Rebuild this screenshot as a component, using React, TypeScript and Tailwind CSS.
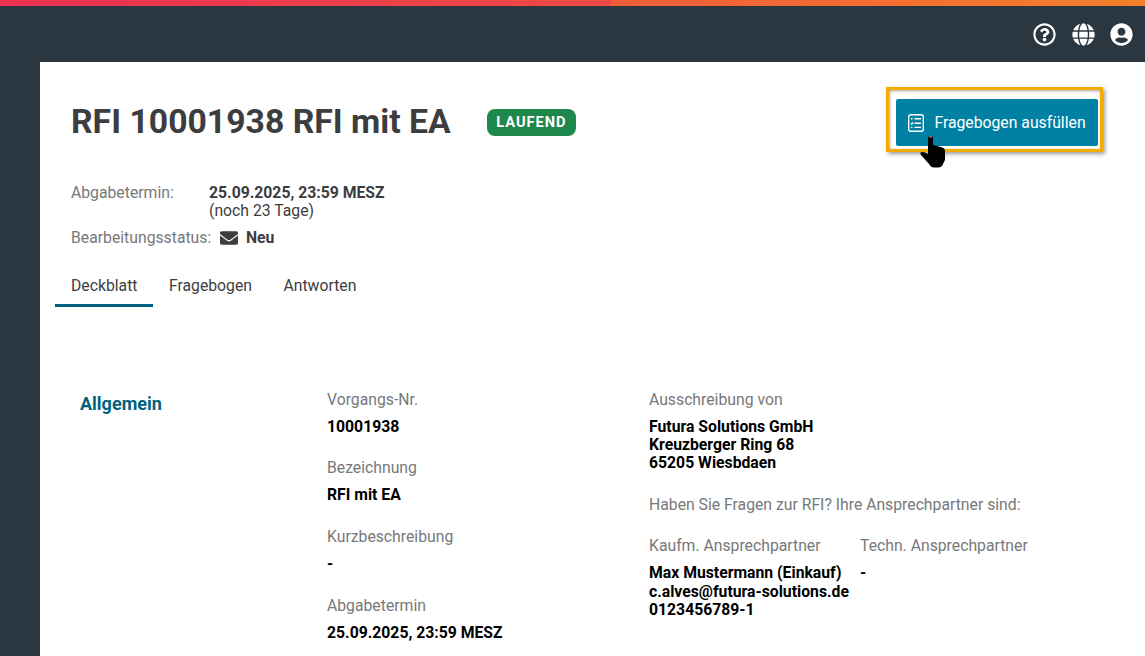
import { FaEnvelope, FaGlobe, FaRegQuestionCircle, FaUserCircle } from "react-icons/fa";

const GENERAL_FIELDS = [
  { label: "Vorgangs-Nr.", value: "10001938" },
  { label: "Bezeichnung", value: "RFI mit EA" },
  { label: "Kurzbeschreibung", value: "-" },
  { label: "Abgabetermin", value: "25.09.2025, 23:59 MESZ" },
];

function ChecklistIcon() {
  return (
    <svg width="16" height="18" viewBox="0 0 16 18" fill="none" stroke="white" strokeWidth="1.4">
      <rect x="0.7" y="0.7" width="14.6" height="16.6" rx="2" />
      <path d="M3 4.800h1.500M6.500 4.800h6.500M3 9.200l.8.8 1.200-1.500M6.500 9.200h6.500M3 13.400h1.500M6.500 13.400h6.500" />
    </svg>
  );
}

function HandCursor() {
  return (
    <svg width="25" height="32" viewBox="0 0 25 32" className="absolute left-[31px] top-[46px]">
      <path
        d="M8 1Q10.500-.5 13 1V9L21 11Q25 12 25 15V24L22 30Q20 31.500 18 31.500H14Q11 31.500 9 28L1 19Q-.5 17 1.500 16 4 15.500 8 18Z"
        fill="black"
      />
      <path d="M9.200 1h2.600" stroke="#f08a8a" strokeWidth="1.2" />
    </svg>
  );
}

export default function App() {
  return (
    <div className="h-[656px] w-[1145px] overflow-hidden bg-[#2a3640] font-['Roboto',sans-serif]">
      <div className="h-[6px] bg-[linear-gradient(90deg,#ee3052_0%,#f14b45_53.4%,#f25d3a_53.4%,#f47f2b_100%)]" />
      <header className="flex h-[56px] items-center justify-end gap-[15.5px] pr-[12px] text-white">
        <FaRegQuestionCircle size={23} />
        <FaGlobe size={23} />
        <FaUserCircle size={23} />
      </header>

      <main className="ml-[40px] h-[594px] bg-white">
        <div className="flex items-start justify-between pl-[31px] pr-[42px] pt-[25px]">
          <div className="flex items-center pt-[11px]">
            <h1 className="text-[33.75px] leading-[48px] font-bold text-[#3d3d3f]">RFI 10001938 RFI mit EA</h1>
            <span className="ml-[36px] rounded-[8px] bg-[#1e874b] px-[9.5px] py-[3px] text-[14.6px] leading-[21px] font-bold tracking-[1px] text-white">
              LAUFEND
            </span>
          </div>
          <div className="relative h-[65px] w-[217px] border-[3px] border-[#f5ab00] pt-[9px] pl-[7px] shadow-[2px_2px_4px_rgba(0,0,0,0.4),inset_1px_1px_3px_rgba(0,0,0,0.35)]">
            <button className="flex h-[47px] w-[202px] items-center justify-center gap-[10px] rounded-[2px] bg-[#0080a3] text-[15.75px] text-white">
              <ChecklistIcon />
              Fragebogen ausfüllen
            </button>
            <HandCursor />
          </div>
        </div>

        <div className="mt-[32px] pl-[31px] text-[15.75px] leading-[18px] text-[#3d3d3f]">
          <div className="flex">
            <span className="w-[138px] text-[#77787a]">Abgabetermin:</span>
            <div>
              <div className="font-bold">25.09.2025, 23:59 MESZ</div>
              <div>(noch 23 Tage)</div>
            </div>
          </div>
          <div className="mt-[9px] flex items-center">
            <span className="w-[149px] text-[#77787a]">Bearbeitungsstatus:</span>
            <FaEnvelope size={18} />
            <span className="ml-[8px] font-bold">Neu</span>
          </div>
        </div>

        <nav className="mt-[19px] ml-[15px] flex text-[15.75px] leading-[24px] text-[#3d3d3f]">
          <a className="h-[41px] border-b-[3px] border-[#00627f] px-[16px] pt-[8px]">Deckblatt</a>
          <a className="pr-[16px] pl-[15.5px] pt-[8px]">Fragebogen</a>
          <a className="px-[15.5px] pt-[8px]">Antworten</a>
        </nav>

        <section className="mt-[75.6px] flex text-[15.75px] leading-[18.4px]">
          <h2 className="w-[287px] pt-[10px] pl-[40px] text-[18px] leading-[22px] font-bold text-[#00627f]">Allgemein</h2>
          <div className="w-[322px] pt-[8px]">
            {GENERAL_FIELDS.map((field) => (
              <div key={field.label} className="mb-[23.27px]">
                <div className="text-[#77787a]">{field.label}</div>
                <div className="mt-[8.6px] font-bold text-black">{field.value}</div>
              </div>
            ))}
          </div>
          <div className="pt-[8px]">
            <div className="text-[#77787a]">Ausschreibung von</div>
            <div className="mt-[8.6px] font-bold leading-[18px] text-black">
              <div>Futura Solutions GmbH</div>
              <div>Kreuzberger Ring 68</div>
              <div>65205 Wiesbdaen</div>
            </div>
            <div className="mt-[24px] text-[#77787a]">Haben Sie Fragen zur RFI? Ihre Ansprechpartner sind:</div>
            <div className="mt-[22.6px] flex">
              <div className="w-[211px]">
                <div className="text-[#77787a]">Kaufm. Ansprechpartner</div>
                <div className="mt-[8.6px] font-bold text-black">
                  <div className="h-[19px]">Max Mustermann (Einkauf)</div>
                  <div className="h-[18px]">c.alves@futura-solutions.de</div>
                  <div>0123456789-1</div>
                </div>
              </div>
              <div>
                <div className="text-[#77787a]">Techn. Ansprechpartner</div>
                <div className="mt-[8.6px] font-bold text-black">-</div>
              </div>
            </div>
          </div>
        </section>
      </main>
    </div>
  );
}
